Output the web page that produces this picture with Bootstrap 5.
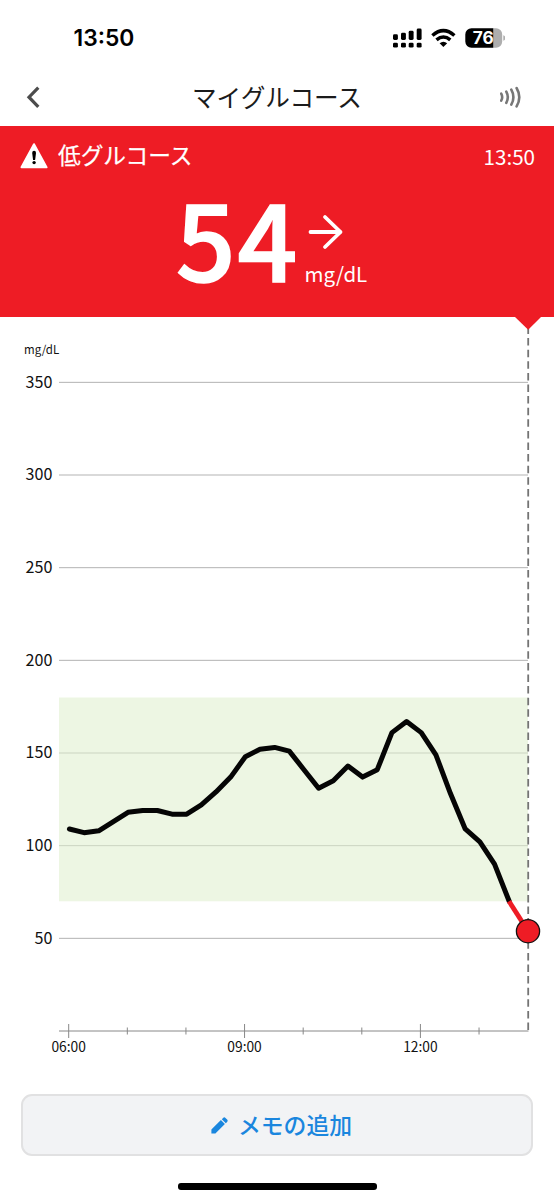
<!DOCTYPE html>
<html lang="ja">
<head>
<meta charset="utf-8">
<meta name="viewport" content="width=device-width, initial-scale=1">
<title>マイグルコース</title>
<link href="https://cdn.jsdelivr.net/npm/bootstrap@5.3.0/dist/css/bootstrap.min.css" rel="stylesheet">
<style>
body{font-family:"Noto Sans CJK JP",sans-serif;background:#fff;color:#1b1b1b;line-height:1}
.phone{width:554px;height:1200px}
.status{height:70px;padding:5px 49px 0 73.5px}
.clock{font:600 22.8px/1 Inter,sans-serif;color:#000;padding-top:2px}
.topbar{height:56px;padding:0 30px 3px 24px}
.topbar h1{font-size:24.6px;font-weight:400;line-height:32px;padding:0 0 2px 10px}
.alert-panel{height:191px;background:#ee1c25;color:#fff}
.alert-name{font-size:22.7px;line-height:30px;font-weight:400;-webkit-text-stroke:.25px #fff;margin:-4px 0 0 10px}
.alert-time{font-size:20.6px;line-height:30px;margin:-1px -1px 0 0}
.reading{font-size:105px;line-height:108px;font-weight:500;-webkit-text-stroke:1.6px #fff;letter-spacing:2px;margin-top:11px}
.trend{padding:41px 11px 0 5px}
.unit{font-size:20.5px;line-height:28px;margin-top:7px}
.memo{height:62px;margin:0 21px;background:#f2f3f5;border:2px solid #e1e1e2;border-radius:11px;color:#1a86de;font-size:22.8px;font-weight:500}
.memo span{margin:0 0 0 10px}
.memo svg{margin-left:9px}
.memo:hover{background:#e9ebee;color:#1a86de}
.home-bar{width:199px;height:6.5px;background:#000;border-radius:3px;margin-top:27px}
svg{display:block;flex:none}
</style>
</head>
<body>
<div class="phone d-flex flex-column overflow-hidden">
  <div class="status d-flex align-items-center justify-content-between">
    <span class="clock">13:50</span>
    <svg width="113" height="22" viewBox="392 26 113 22">
      <g><rect x="393" y="33.3" width="4.9" height="5.7" rx="1.4"/><rect x="401" y="31.8" width="4.9" height="7.2" rx="1.4"/><rect x="408.700" y="29.8" width="4.9" height="9.2" rx="1.4"/><rect x="416.700" y="27.6" width="4.9" height="11.4" rx="1.4"/>
      <rect x="393" y="41.700" width="4.9" height="4.9" rx="1.4"/><rect x="401" y="41.700" width="4.9" height="4.9" rx="1.4"/><rect x="408.700" y="41.700" width="4.9" height="4.9" rx="1.4"/><rect x="416.700" y="41.700" width="4.9" height="4.9" rx="1.4"/></g>
      <g fill="none" stroke="#000" stroke-width="3.5"><path d="M432.400 34.500Q443.400 24.800 454.400 34.500"/><path d="M436.500 38.900Q443.400 33 450.300 38.900"/></g>
      <path d="M439.600 42.200Q443.400 39.200 447.200 42.200L443.400 46Z"/>
      <path d="M493.3 27.3H496a6.2 6.2 0 0 1 6.2 6.2v7a6.2 6.2 0 0 1-6.2 6.2h-2.7zM503.3 34.2q2 .7 2 2.8t-2 2.8z" fill="#aeaeae"/>
      <path d="M493.3 27.3H471.5a6.2 6.2 0 0 0-6.2 6.2v7a6.2 6.2 0 0 0 6.2 6.2h21.8z"/>
      <text x="483.3" y="43.2" text-anchor="middle" font-family="Inter,sans-serif" font-weight="700" font-size="16.8" fill="#fff" textLength="21" lengthAdjust="spacingAndGlyphs">76</text>
    </svg>
  </div>
  <header class="topbar d-flex align-items-center justify-content-between">
    <svg width="20" height="24" viewBox="24 85 20 24" fill="none" stroke="#4c4c4c" stroke-width="3.2"><path d="M38.3 87.6L29 97.2l9.3 9.7"/></svg>
    <h1 class="m-0">マイグルコース</h1>
    <svg width="24" height="24" viewBox="500 85 24 24" fill="none" stroke="#777" stroke-width="2.6" stroke-linecap="round"><path d="M501.200 93.700q2 3.500 0 7M506.300 91.600q3 5.600 0 11.200M511.300 89.700q4.200 7.500 0 15M516.600 88q5.400 9.200 0 18.400"/></svg>
  </header>
  <section class="alert-panel">
    <div class="d-flex align-items-center justify-content-between px-3 pt-3 mx-1">
      <div class="d-flex align-items-center">
        <svg width="28" height="27" viewBox="0 1 28 27"><path d="M14 2.2L26.5 25.3H1.5Z" fill="#fff" stroke="#fff" stroke-width="2" stroke-linejoin="round"/><path d="M12.2 11q0-2.200 1.900-2.200t1.900 2.200l-.9 7h-2z"/><circle cx="14.100" cy="20.600" r="1.700"/></svg>
        <span class="alert-name">低グルコース</span>
      </div>
      <span class="alert-time">13:50</span>
    </div>
    <div class="d-flex justify-content-center">
      <span class="reading">54</span>
      <div class="trend d-flex flex-column">
        <svg width="40" height="40" viewBox="304.500 212 40 40" fill="none" stroke="#fff" stroke-width="3.8" stroke-linecap="round" stroke-linejoin="round"><path d="M311 232h30M325.500 217L341 232l-15.500 15"/></svg>
        <span class="unit">mg/dL</span>
      </div>
    </div>
  </section>
  <svg id="chart" width="554" height="777" viewBox="0 317 554 777" role="img" aria-label="mg/dL">
    <g id="grid" stroke="#b3b3b3"></g>
    <path d="M59 697.400H528V901.300H59Z" fill="#ddefcb" fill-opacity=".54"/>
    <g id="axis" stroke="#888"><path d="M59 1031H528.500"/></g>
    <path d="M528.200 326.500V1032" stroke="#747474" stroke-width="1.8" stroke-dasharray="7.500 4.100"/>
    <path d="M515 317H541L528.200 329.800Z" fill="#ee1c25"/>
    <g id="labels" fill="#111" font-size="16.100"><text x="24" y="354" font-size="11.500">mg/dL</text></g>
    <polyline id="curve" fill="none" stroke="#050505" stroke-width="5" stroke-linejoin="round" stroke-linecap="round"/>
    <path d="M509 901.300L528 931" stroke="#ee1c25" stroke-width="4.800"/>
    <circle cx="528" cy="931.200" r="11.600" fill="#ee1c25" stroke="#111" stroke-width="1.300"/>
  </svg>
  <button class="memo btn d-flex align-items-center justify-content-center p-0">
    <svg width="17" height="17" viewBox="0 0 17 17" fill="#1a86de"><path d="M.4 12.600L9.900 3.100l4 4L4.400 16.600H.4zM10.800 2.200l1.300-1.300q1.200-1.100 2.400 0l1.600 1.600q1.100 1.200 0 2.400l-1.300 1.300z"/></svg>
    <span>メモの追加</span>
  </button>
  <div class="home-bar mx-auto"></div>
</div>
<script src="https://cdn.jsdelivr.net/npm/bootstrap@5.3.0/dist/js/bootstrap.bundle.min.js"></script>
<script>
const yOf = v => 1031 - v * 1.8533;
const xOf = i => 69.4 + i * 14.66;
const add = (parent, tag, attrs, text) => {
  const el = document.createElementNS('http://www.w3.org/2000/svg', tag);
  for (const k in attrs) el.setAttribute(k, attrs[k]);
  if (text) el.textContent = text;
  document.getElementById(parent).append(el);
};
for (let v = 50; v <= 350; v += 50) {
  add('grid', 'path', {d: `M59 ${yOf(v)}H528`});
  add('labels', 'text', {x: 52.4, y: yOf(v) + 5.3, 'text-anchor': 'end'}, String(v));
}
for (let h = 0; h < 8; h++) {
  const x = 68.7 + h * 58.62, r = h % 3 ? 3.5 : 7;
  add('axis', 'path', {d: `M${x} ${1031 - r}V${1031 + r}`});
  if (h % 3 === 0) add('labels', 'text', {x, y: 1052.4, 'text-anchor': 'middle', 'font-size': 13.8}, String(6 + h).padStart(2, '0') + ':00');
}
const glucose = [109,107,108,113,118,119,119,117,117,122,129,137,148,152,153,151,141,131,135,143,137,141,161,167,161,149,128,109,102,90,70];
document.getElementById('curve').setAttribute('points', glucose.map((v, i) => `${xOf(i)},${yOf(v)}`).join(' '));
</script>
</body>
</html>
